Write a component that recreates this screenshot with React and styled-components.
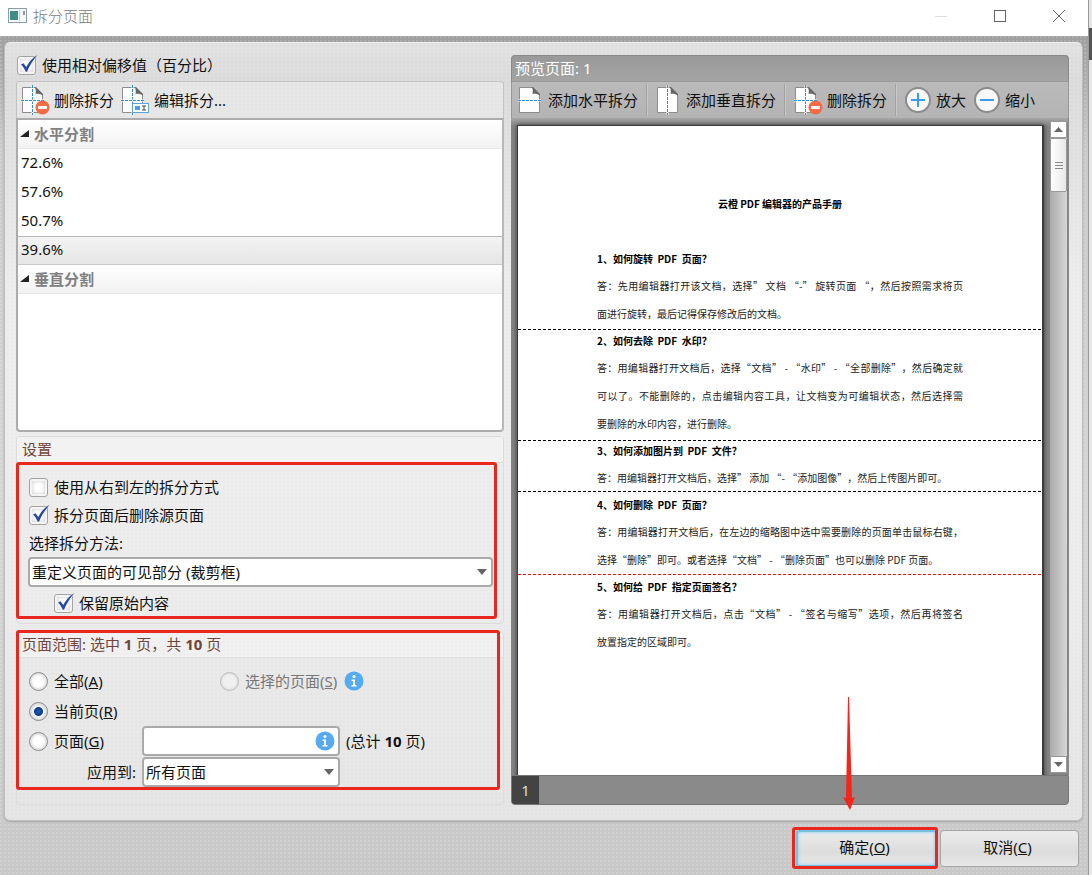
import { useState } from 'react'
import styled, { createGlobalStyle, css } from 'styled-components'

const GlobalStyle = createGlobalStyle`
  * {
    box-sizing: border-box;
  }

  body {
    margin: 0;
    font-family: 'Noto Sans', 'Noto Sans CJK SC', sans-serif;
    font-size: 15px;
    line-height: 20px;
    color: #111;
  }

  button, input, select {
    font: inherit;
    color: inherit;
    margin: 0;
  }
`

const texture = 'radial-gradient(circle at 1px 1px, rgba(255, 255, 255, 0.14) 1px, transparent 1px)'

const arrow =
  "url(\"data:image/svg+xml,%3Csvg xmlns='http://www.w3.org/2000/svg' width='10' height='6'%3E%3Cpath d='M0 0h10L5 6z' fill='%23666'/%3E%3C/svg%3E\")"

// the strip of desktop behind the dialog stays visible on the right
const Desktop = styled.div`
  height: 100vh;
  min-height: 700px;
  padding-right: 3px;
  background: linear-gradient(#e4e4e4 28px, #555 28px, #555 60px, #e6e6e6 60px);
`

const Dialog = styled.div`
  height: 100%;
  display: flex;
  flex-direction: column;
  border-right: 1px solid #999;
  background: ${texture} 0 0 / 4px 4px,
    linear-gradient(#a0a0a0 36px, #cacaca 150px, #d6d6d6 60%, #c8c8c8);
`

const TitleBar = styled.header`
  height: 36px;
  flex: none;
  display: flex;
  align-items: center;
  padding-left: 8px;
  gap: 6px;
  padding-bottom: 4px;
  background: #fff;
`

const Caption = styled.h1`
  flex: 1;
  margin: 0;
  font-size: 15px;
  font-weight: 300;
  color: #777;
`

const WindowButtons = styled.div`
  display: flex;
`

const WindowButton = styled.button`
  width: 59px;
  height: 32px;
  padding: 0;
  border: 0;
  background: none;
  display: flex;
  align-items: center;
  justify-content: center;
`

const Panel = styled.main`
  flex: 1;
  min-height: 0;
  margin: 6px 5px 0 4px;
  padding: 12px 13px 15px 11px;
  display: grid;
  grid-template-columns: minmax(0, 488fr) minmax(0, 558fr);
  gap: 7px;
  border: 1px solid #bdbdbd;
  border-top-color: #eee;
  border-radius: 6px;
  background: ${texture} 0 0 / 4px 4px,
    linear-gradient(#e0e0e0, #dadada 40px, #ececec 250px, #ebebeb 70%, #e3e3e3);
  box-shadow: 0 1px 2px rgba(0, 0, 0, 0.2);
`

const Column = styled.div`
  min-height: 0;
  display: flex;
  flex-direction: column;
`

const Label = styled.label`
  display: inline-flex;
  align-items: center;
  gap: 6px;
  white-space: nowrap;
  color: ${(props) => (props.$muted ? '#777' : 'inherit')};
`

const TickBox = styled.span`
  position: relative;
  display: flex;

  svg {
    position: absolute;
    left: 3px;
    bottom: 2px;
    pointer-events: none;
  }
`

const TickInput = styled.input`
  appearance: none;
  width: 19px;
  height: 19px;
  border: 1px solid #a4a4a4;
  border-radius: 3px;
  background: #fff;
  box-shadow: inset 0 0 0 2px #f4f4f4, inset 0 0 4px 2px #ccc;
`

const RadioInput = styled.input`
  appearance: none;
  width: 19px;
  height: 19px;
  border: 1px solid #8a8a8a;
  border-radius: 50%;
  background: #fff;
  box-shadow: inset 0 0 3px 1px #ccc;

  &:checked {
    background: radial-gradient(circle, #1d5cb4 0, #0b3c8c 4px, #f4f6fa 5px);
  }

  &:disabled {
    border-color: #bbb;
    background: #f0f0f0;
    box-shadow: inset 0 0 2px 1px #ddd;
  }
`

const TopOption = styled.div`
  height: 26px;
  padding: 0 0 6px 1px;
  display: flex;
  align-items: center;
`

const Toolbar = styled.div`
  height: 37px;
  flex: none;
  display: flex;
  align-items: center;
  gap: ${(props) => (props.$dark ? '8px' : '7px')};
  padding: ${(props) => (props.$dark ? '0 6px' : '0 4px')};
  border: 1px solid #c2c2c2;
  border-bottom: 0;
  border-radius: 4px 4px 0 0;
  background: ${texture} 0 0 / 4px 4px, #e5e5e5;
  ${(props) =>
    props.$dark &&
    css`
      border-color: #999;
      border-radius: 0;
      background: linear-gradient(#bababa, #b4b4b4);
    `}
`

const ToolButton = styled.button`
  display: flex;
  align-items: center;
  gap: ${(props) => (props.$wide ? '7px' : '4px')};
  padding: 0;
  border: 0;
  background: none;
  white-space: nowrap;

  svg {
    flex: none;
  }
`

const Divider = styled.span`
  width: 2px;
  height: 32px;
  border-left: 1px solid #a2a2a2;
  border-right: 1px solid #c8c8c8;
`

const SplitList = styled.div`
  flex: 1;
  min-height: 0;
  overflow: hidden;
  border: 2px solid #acacac;
  border-right-color: #b8b8b8;
  border-radius: 0 0 4px 4px;
  background: #fff;
`

const GroupTitle = styled.h2`
  height: 29px;
  margin: 0;
  padding-left: 2px;
  display: flex;
  align-items: center;
  gap: 5px;
  font-size: 15px;
  font-weight: 700;
  color: #808080;
  border-bottom: 1px solid #e6e6e6;
  background: linear-gradient(#fff, #f2f2f2);
`

const Splits = styled.ul`
  margin: 0;
  padding: 0;
  list-style: none;
`

const Split = styled.li`
  height: 29px;
  padding: 2px 3px;
  border: solid transparent;
  border-width: 1px 0;
  ${(props) =>
    props.$selected &&
    css`
      border-color: #b8b8b8 transparent #c8c8c8;
      background: linear-gradient(#f3f3f3, #e5e5e5);
    `}
`

const Group = styled.section`
  position: relative;
  flex: none;
  margin-top: ${(props) => (props.$spaced ? '7px' : '4px')};
  border: 1px solid #dcdcdc;
  border-radius: 4px;
`

const GroupHeading = styled.h2`
  height: 26px;
  margin: 0;
  padding: 2px 5px;
  font-size: 15px;
  font-weight: 400;
  color: #70463a;
  border-bottom: 1px solid #e0e0e0;
  background: rgba(255, 255, 255, 0.3);
`

const Highlight = styled.div`
  position: absolute;
  inset: ${(props) => props.$inset};
  border: 3px solid #e8281e;
  border-radius: 3px;
  pointer-events: none;
`

const SettingsBody = styled.div`
  padding: 10px 10px 4px 11px;
`

const Line = styled.div`
  height: ${(props) => (props.$tall ? '32px' : '28px')};
  display: flex;
  align-items: center;
  padding-left: ${(props) => (props.$indent ? '26px' : '1px')};
`

const Select = styled.select`
  appearance: none;
  width: 100%;
  height: 30px;
  padding: 0 24px 0 2px;
  border: 2px solid #aaa;
  border-radius: 4px;
  background: ${arrow} no-repeat right 4px center, #fff;
`

const RangeBody = styled.div`
  padding: 8px 12px 16px;
`

const RangeRow = styled.div`
  display: grid;
  grid-template-columns: ${(props) => (props.$halves ? '191px auto 1fr' : '107px 198px 1fr')};
  column-gap: ${(props) => (props.$halves ? '0' : '6px')};
  align-items: center;
  height: ${(props) => (props.$tall ? '32px' : '30px')};
`

const FieldLabel = styled.label`
  text-align: right;
`

const InfoSlot = styled.span`
  display: flex;
  padding-left: 7px;
`

const PageField = styled.div`
  display: flex;
  align-items: center;
  height: 30px;
  padding-right: 3px;
  border: 2px solid #aaa;
  border-radius: 4px;
  background: #fff;
`

const PageInput = styled.input`
  flex: 1;
  min-width: 0;
  padding: 0 4px;
  border: 0;
  outline: 0;
  background: none;
`

const PreviewTitle = styled.h2`
  height: 26px;
  flex: none;
  margin: 0;
  padding: 2px 3px;
  font-size: 15px;
  font-weight: 400;
  color: #fff;
  border: 1px solid #8a8a8a;
  border-bottom: 0;
  border-radius: 4px 4px 0 0;
  background: linear-gradient(#999, #a4a4a4);
`

const Viewport = styled.div`
  flex: 1;
  min-height: 0;
  display: flex;
  gap: 6px;
  padding: 0 1px 0 6px;
  overflow: hidden;
  border-right: 1px solid #888;
  background: linear-gradient(#a6a6a6, #858585 8px);
`

const Sheet = styled.article`
  position: relative;
  flex: 1;
  align-self: flex-start;
  height: 742px;
  margin-top: 7px;
  padding: 68px 79px 0;
  border: solid #3c3c3c;
  border-width: 1px 2px 0 1px;
  background: #fff;
  box-shadow: 0 0 5px rgba(0, 0, 0, 0.6);
  font-family: 'Noto Sans CJK SC', sans-serif;
  font-size: 10px;
  white-space: nowrap;
  text-spacing-trim: space-all;
`

const SheetTitle = styled.h3`
  margin: 0 0 32px;
  font-size: 10px;
  line-height: 20px;
  text-align: center;
  color: #000;
`

const Question = styled.h4`
  margin: 0;
  font-size: 10px;
  line-height: 26px;
  white-space: pre;
  color: #000;
`

const Answer = styled.p`
  margin: 0;
  line-height: 28px;
  text-align: justify;
  color: #222;
`

const AnswerLine = styled.span`
  display: block;
  white-space: normal;
  text-align-last: ${(props) => (props.$full ? 'justify' : 'left')};
`

const Guide = styled.div`
  position: absolute;
  left: 0;
  right: 0;
  height: 1px;
  background: repeating-linear-gradient(
    90deg,
    ${(props) => (props.$active ? '#e81010' : '#000')} 0 3px,
    transparent 3px 5px
  );
`

const ScrollBar = styled.div`
  width: 17px;
  display: flex;
  flex-direction: column;
  margin: 3px 0 2px;
  background: linear-gradient(90deg, #aaa, #d6d6d6);
`

const ScrollButton = styled.button`
  height: 17px;
  flex: none;
  padding: 0;
  display: flex;
  align-items: center;
  justify-content: center;
  border: 1px solid #999;
  background: #fff;
`

const Thumb = styled.div`
  height: 54px;
  display: flex;
  align-items: center;
  justify-content: center;
  border: 1px solid #999;
  border-radius: 2px;
  background: linear-gradient(90deg, #fff, #e8e8e8);
`

const Track = styled.div`
  flex: 1;
`

const PageTabs = styled.div`
  height: 30px;
  flex: none;
  display: flex;
  border: 1px solid #777;
  border-radius: 0 0 4px 4px;
  background: #8a8a8a;
`

const PageTab = styled.button`
  width: 27px;
  padding: 0;
  border: 0;
  border-radius: 0 0 0 3px;
  background: #434343;
  color: #ddd;
`

const Footer = styled.footer`
  height: 54px;
  flex: none;
  display: flex;
  align-items: flex-start;
  justify-content: flex-end;
  gap: 3px;
  padding: 9px 9px 0 0;
`

const ConfirmSlot = styled.div`
  position: relative;
`

const Arrow = styled.svg`
  position: absolute;
  left: 46px;
  bottom: 57px;
`

const DialogButton = styled.button`
  width: ${(props) => (props.$primary ? '141px' : '139px')};
  height: 37px;
  padding: 0 4px 3px 0;
  border: 1px solid #a6a6a6;
  border-radius: 4px;
  background: linear-gradient(#ececec, #dcdcdc 60%, #e8e8e8);
  ${(props) =>
    props.$primary &&
    css`
      border: 2px solid #79bfe0;
      box-shadow: inset 0 0 3px 1px #a5daf2;
    `}
`

function Check({ label, defaultChecked }) {
  const [checked, setChecked] = useState(defaultChecked)
  return (
    <Label>
      <TickBox>
        <TickInput type="checkbox" checked={checked} onChange={() => setChecked(!checked)} />
        {checked && (
          <svg width="18" height="18" viewBox="0 0 18 18">
            <path d="M1 9.5 3.5 8.2 6.3 12C8.5 7.5 12 3 17.5 0 13 5 9.5 10.5 7 16.8H5.8C4.5 14 3 11.5 1 9.5z" fill="#2749a0" />
          </svg>
        )}
      </TickBox>
      {label}
    </Label>
  )
}

function Radio({ name, value, selected, onSelect, text, hotkey, disabled }) {
  return (
    <Label $muted={disabled}>
      <RadioInput
        type="radio"
        name={name}
        checked={selected === value}
        disabled={disabled}
        onChange={() => onSelect(value)}
      />
      <span>
        {text}(<u>{hotkey}</u>)
      </span>
    </Label>
  )
}

function SplitPageIcon({ horizontal, vertical, badge }) {
  const width = badge ? 29 : 23
  return (
    <svg width={width} height="30" viewBox={`0 0 ${width} 30`}>
      <path d="M1.5 2.5H14L21.5 10V27.5H1.5z" fill="#fdfdfd" stroke="#8c8c8c" />
      <path d="M14 2C15 5 15 7 14.500 9 17 8.500 20 9 22 10.500V9L15 2z" fill="#666" />
      {vertical && <path d="M11.5 0V30" stroke="#fff" strokeWidth="2" />}
      {vertical && <path d="M11.5 0V30" stroke="#2f8be6" strokeDasharray="3 1" />}
      {horizontal && <path d="M0 15.5H23" stroke="#fff" strokeWidth="2" />}
      {horizontal && <path d="M0 15.5H23" stroke="#2f8be6" strokeDasharray="3 1" />}
      {badge === 'remove' && (
        <g>
          <circle cx="21.5" cy="22.5" r="7" fill="#f36c45" />
          <rect x="17" y="21" width="9" height="3" rx="1" fill="#fff" />
        </g>
      )}
      {badge === 'edit' && (
        <g>
          <rect x="11.5" y="18.5" width="16" height="9" fill="#fff" stroke="#5ba5dc" />
          <rect x="14" y="21" width="5" height="4" fill="#4aa0e6" />
          <path d="M21 21H25M21 25H25M23 21V25" stroke="#444" />
        </g>
      )}
    </svg>
  )
}

function ZoomIcon({ plus }) {
  return (
    <svg width="27" height="28" viewBox="1 0 27 28">
      <circle cx="14" cy="14" r="12" fill="#f7f7f7" stroke="#8b8b8b" strokeWidth="2" />
      <path d={plus ? 'M7 14H21M14 7V21' : 'M7 14H21'} stroke="#3c9cec" strokeWidth="2" />
    </svg>
  )
}

function InfoIcon() {
  return (
    <svg width="20" height="20" viewBox="0 0 20 20">
      <circle cx="10" cy="10" r="9.5" fill="#56aaf0" />
      <circle cx="10" cy="5.5" r="1.5" fill="#fff" />
      <path d="M7.5 8.5H11V14H12.5V15.5H7.5V14H9V10H7.5z" fill="#fff" />
    </svg>
  )
}

function Expander() {
  return (
    <svg width="9" height="8" viewBox="0 0 9 8">
      <path d="M9 0V7H0z" fill="#222" />
    </svg>
  )
}

const horizontalSplits = [72.6, 57.6, 50.7, 39.6]

const manual = [
  {
    question: '1、如何旋转  PDF  页面？',
    answer: [
      '答：先用编辑器打开该文档，选择” 文档 “-” 旋转页面 “，然后按照需求将页',
      '面进行旋转，最后记得保存修改后的文档。',
    ],
  },
  {
    question: '2、如何去除  PDF  水印？',
    answer: [
      '答：用编辑器打开文档后，选择“文档” - “水印” - “全部删除”，然后确定就',
      '可以了。不能删除的，点击编辑内容工具，让文档变为可编辑状态，然后选择需',
      '要删除的水印内容，进行删除。',
    ],
  },
  {
    question: '3、如何添加图片到  PDF  文件？',
    answer: ['答：用编辑器打开文档后，选择” 添加 “- “添加图像”，然后上传图片即可。'],
  },
  {
    question: '4、如何删除  PDF  页面？',
    answer: [
      '答：用编辑器打开文档后，在左边的缩略图中选中需要删除的页面单击鼠标右键，',
      '选择“删除”即可。或者选择“文档” - “删除页面”也可以删除 PDF 页面。',
    ],
  },
  {
    question: '5、如何给  PDF  指定页面签名？',
    answer: [
      '答：用编辑器打开文档后，点击“文档” - “签名与缩写”选项，然后再将签名',
      '放置指定的区域即可。',
    ],
  },
]

function App() {
  const [current, setCurrent] = useState(39.6)
  const [range, setRange] = useState('current')

  return (
    <Desktop>
      <GlobalStyle />
      <Dialog>
        <TitleBar>
          <svg width="19" height="16" viewBox="0 0 19 16">
            <rect x="0.5" y="0.5" width="18" height="14" fill="#f4f8f8" stroke="#8aa0a4" />
            <rect x="2" y="3" width="8" height="9" fill="#3f8d86" />
            <path d="M11.5 2V13" stroke="#c4d0d2" />
            <path d="M16 3V7" stroke="#336" />
          </svg>
          <Caption>拆分页面</Caption>
          <WindowButtons>
            <WindowButton aria-label="最小化">
              <svg width="12" height="12">
                <path d="M0 6.5H12" stroke="#ddd" />
              </svg>
            </WindowButton>
            <WindowButton aria-label="最大化">
              <svg width="12" height="12">
                <rect x="0.5" y="0.5" width="11" height="11" fill="none" stroke="#666" />
              </svg>
            </WindowButton>
            <WindowButton aria-label="关闭">
              <svg width="12" height="12">
                <path d="M0 0 12 12M12 0 0 12" stroke="#666" />
              </svg>
            </WindowButton>
          </WindowButtons>
        </TitleBar>

        <Panel>
          <Column>
            <TopOption>
              <Check label="使用相对偏移值（百分比）" defaultChecked />
            </TopOption>
            <Toolbar>
              <ToolButton>
                <SplitPageIcon horizontal vertical badge="remove" />
                删除拆分
              </ToolButton>
              <ToolButton>
                <SplitPageIcon horizontal vertical badge="edit" />
                编辑拆分...
              </ToolButton>
            </Toolbar>
            <SplitList>
              <GroupTitle>
                <Expander />
                水平分割
              </GroupTitle>
              <Splits>
                {horizontalSplits.map((split) => (
                  <Split key={split} $selected={split === current} onClick={() => setCurrent(split)}>
                    {split}%
                  </Split>
                ))}
              </Splits>
              <GroupTitle>
                <Expander />
                垂直分割
              </GroupTitle>
            </SplitList>

            <Group>
              <GroupHeading>设置</GroupHeading>
              <SettingsBody>
                <Line>
                  <Check label="使用从右到左的拆分方式" defaultChecked={false} />
                </Line>
                <Line>
                  <Check label="拆分页面后删除源页面" defaultChecked />
                </Line>
                <Line>
                  <label htmlFor="method">选择拆分方法:</label>
                </Line>
                <Select id="method">
                  <option>重定义页面的可见部分 (裁剪框)</option>
                </Select>
                <Line $tall $indent>
                  <Check label="保留原始内容" defaultChecked />
                </Line>
              </SettingsBody>
              <Highlight $inset="25px 6px 4px -1px" />
            </Group>

            <Group $spaced>
              <GroupHeading>
                页面范围: 选中 <b>1</b> 页，共 <b>10</b> 页
              </GroupHeading>
              <RangeBody>
                <RangeRow $halves>
                  <Radio name="range" value="all" selected={range} onSelect={setRange} text="全部" hotkey="A" />
                  <Radio
                    name="range"
                    value="selected"
                    selected={range}
                    onSelect={setRange}
                    text="选择的页面"
                    hotkey="S"
                    disabled
                  />
                  <InfoSlot>
                    <InfoIcon />
                  </InfoSlot>
                </RangeRow>
                <RangeRow>
                  <Radio name="range" value="current" selected={range} onSelect={setRange} text="当前页" hotkey="R" />
                </RangeRow>
                <RangeRow>
                  <Radio name="range" value="pages" selected={range} onSelect={setRange} text="页面" hotkey="G" />
                  <PageField>
                    <PageInput type="text" aria-label="页面" />
                    <InfoIcon />
                  </PageField>
                  <span>
                    (总计 <b>10</b> 页)
                  </span>
                </RangeRow>
                <RangeRow $tall>
                  <FieldLabel htmlFor="apply">应用到:</FieldLabel>
                  <Select id="apply">
                    <option>所有页面</option>
                  </Select>
                </RangeRow>
              </RangeBody>
              <Highlight $inset="-2px 3px 14px -1px" />
            </Group>
          </Column>

          <Column>
            <PreviewTitle>预览页面: 1</PreviewTitle>
            <Toolbar $dark>
              <ToolButton $wide>
                <SplitPageIcon horizontal />
                添加水平拆分
              </ToolButton>
              <Divider />
              <ToolButton $wide>
                <SplitPageIcon vertical />
                添加垂直拆分
              </ToolButton>
              <Divider />
              <ToolButton>
                <SplitPageIcon horizontal vertical badge="remove" />
                删除拆分
              </ToolButton>
              <Divider />
              <ToolButton>
                <ZoomIcon plus />
                放大
              </ToolButton>
              <ToolButton>
                <ZoomIcon />
                缩小
              </ToolButton>
            </Toolbar>
            <Viewport>
              <Sheet lang="zh-CN">
                <SheetTitle>云橙 PDF 编辑器的产品手册</SheetTitle>
                {manual.map(({ question, answer }) => (
                  <div key={question}>
                    <Question>{question}</Question>
                    <Answer>
                      {answer.map((line, index) => (
                        <AnswerLine key={line} $full={index < answer.length - 1}>
                          {line}
                        </AnswerLine>
                      ))}
                    </Answer>
                  </div>
                ))}
                {horizontalSplits.map((split) => (
                  <Guide key={split} $active={split === current} style={{ top: `${100 - split}%` }} />
                ))}
              </Sheet>
              <ScrollBar>
                <ScrollButton aria-label="向上滚动">
                  <svg width="9" height="5">
                    <path d="M0 5H9L4.5 0z" fill="#666" />
                  </svg>
                </ScrollButton>
                <Thumb>
                  <svg width="8" height="8">
                    <path d="M0 1.5H8M0 4.5H8M0 7.5H8" stroke="#888" />
                  </svg>
                </Thumb>
                <Track />
                <ScrollButton aria-label="向下滚动">
                  <svg width="9" height="5">
                    <path d="M0 0H9L4.5 5z" fill="#666" />
                  </svg>
                </ScrollButton>
              </ScrollBar>
            </Viewport>
            <PageTabs>
              <PageTab>1</PageTab>
            </PageTabs>
          </Column>
        </Panel>

        <Footer>
          <ConfirmSlot>
            <DialogButton $primary>
              确定(<u>O</u>)
            </DialogButton>
            <Highlight $inset="-3px -1px -2px -4px" />
            <Arrow width="14" height="113" viewBox="0 0 14 113">
              <path d="M6 0H7L10 101 13 100 8 113 1 100 4 101z" fill="#f7241a" />
            </Arrow>
          </ConfirmSlot>
          <DialogButton>
            取消(<u>C</u>)
          </DialogButton>
        </Footer>
      </Dialog>
    </Desktop>
  )
}

export default App
